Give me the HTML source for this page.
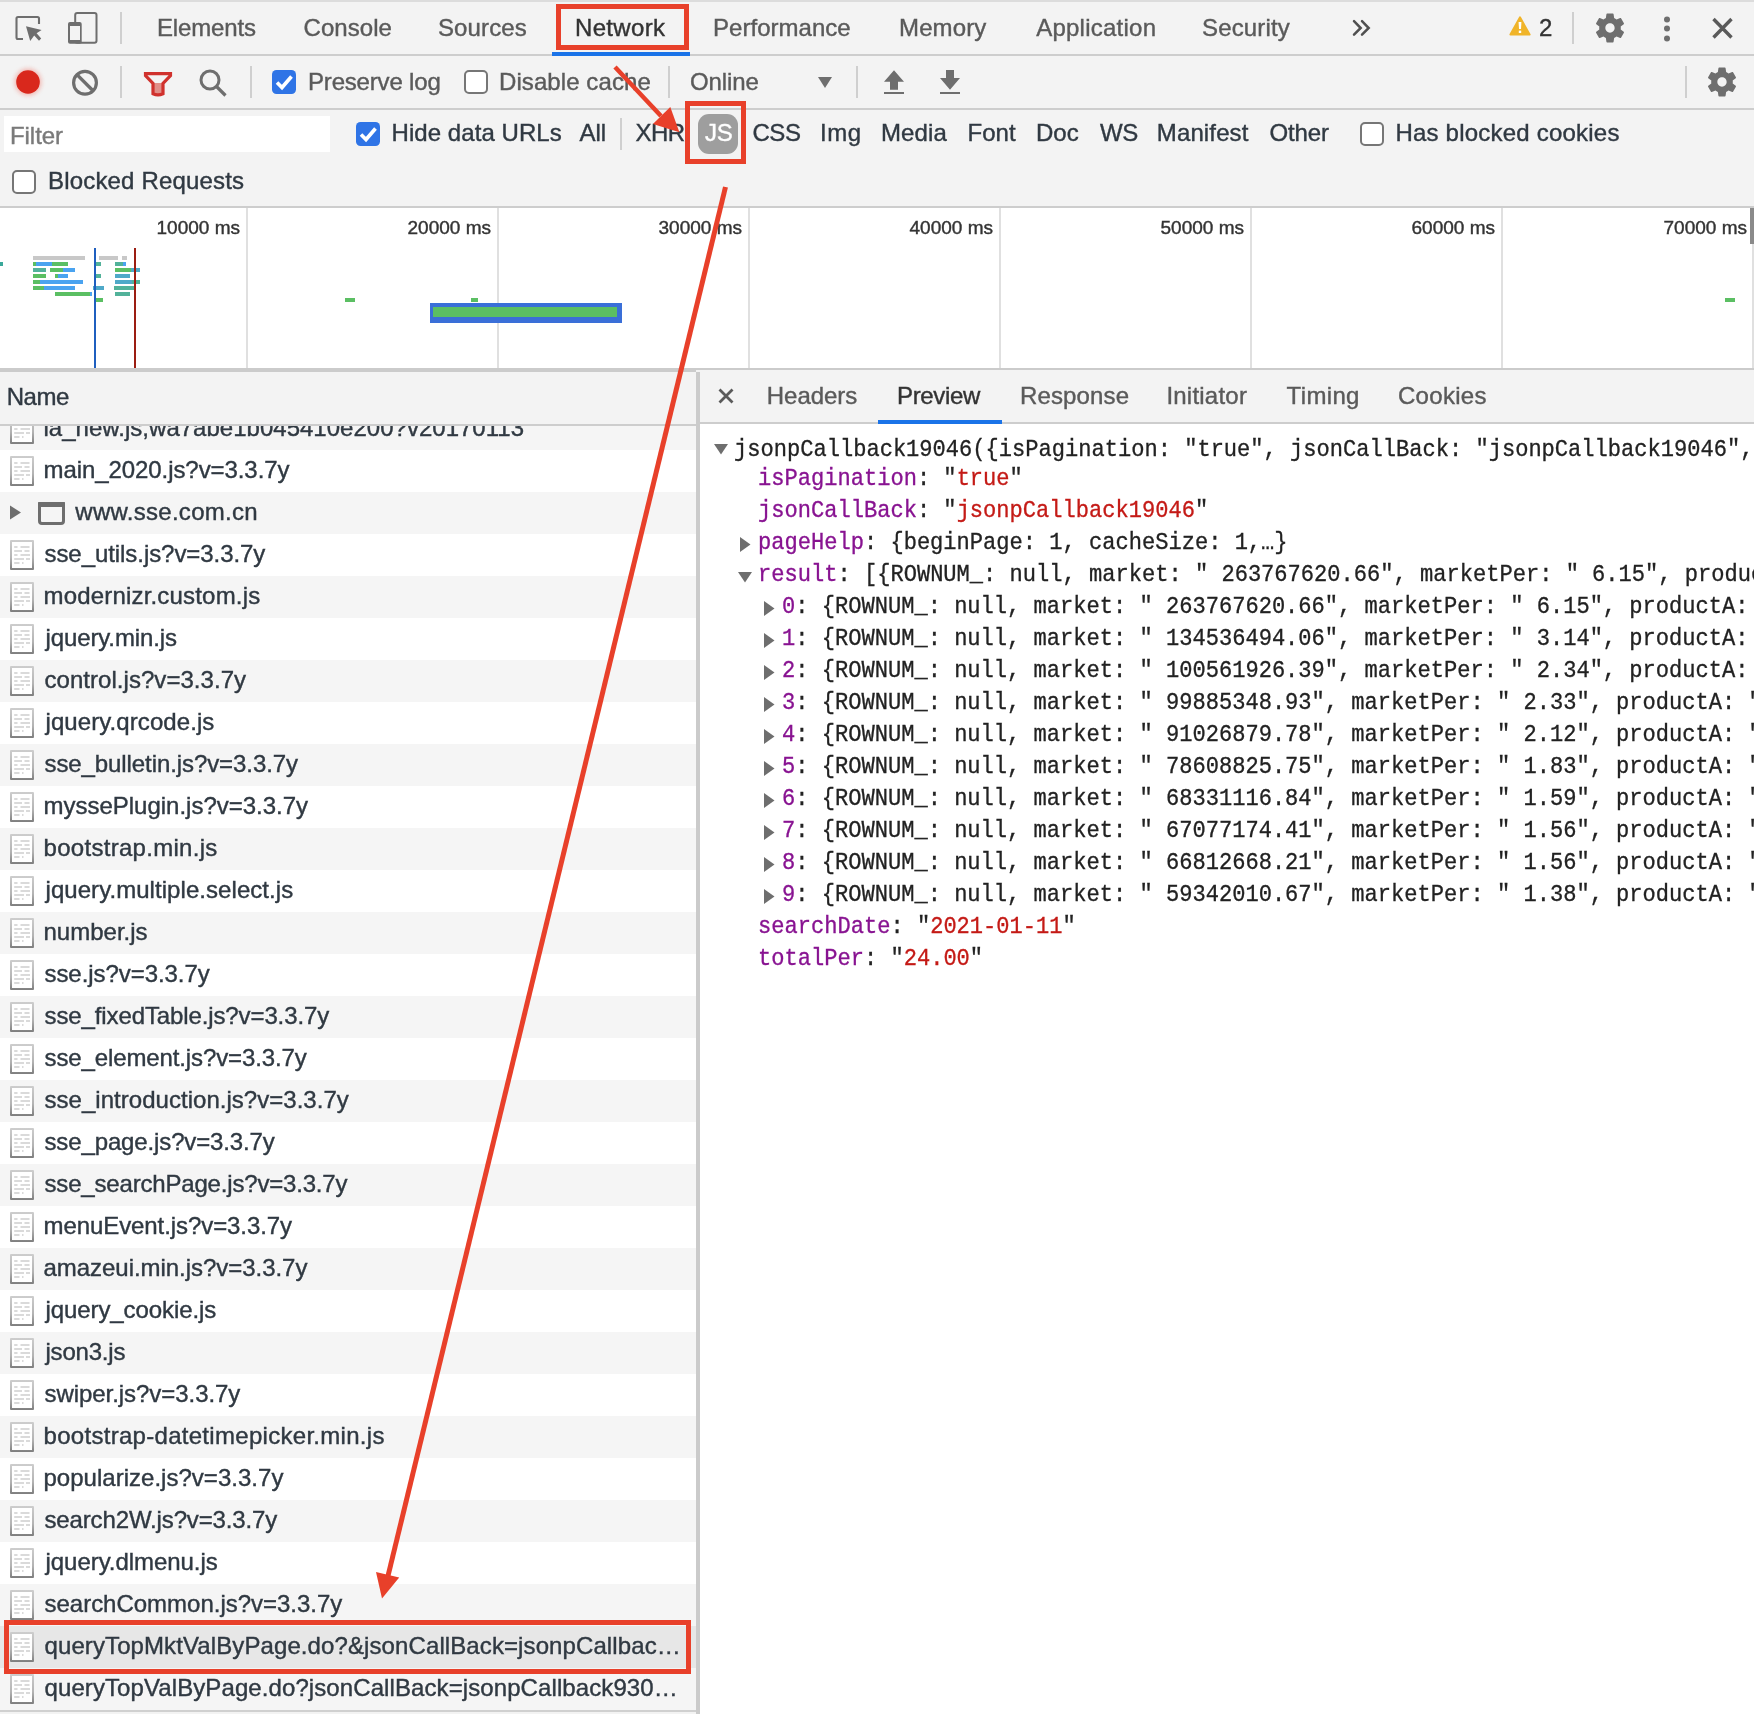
<!DOCTYPE html>
<html><head><meta charset="utf-8"><style>
html,body{margin:0;padding:0;}
body{width:1754px;height:1714px;position:relative;overflow:hidden;will-change:transform;background:#f3f3f3;font-family:"Liberation Sans", sans-serif;}
body div{position:absolute;}
.t{line-height:1;white-space:nowrap;font-family:"Liberation Sans", sans-serif;-webkit-text-stroke:0.4px currentColor;}
.m{line-height:1;white-space:pre;font-family:"Liberation Mono", monospace;-webkit-text-stroke:0.3px currentColor;}
</style></head><body>
<svg width="0" height="0" style="position:absolute"><defs><linearGradient id="fg" x1="0" y1="0" x2="0" y2="1"><stop offset="0" stop-color="#cdcdcd"/><stop offset="0.6" stop-color="#b3b3b3"/><stop offset="1" stop-color="#7e7e7e"/></linearGradient><g id="fileicon"><rect x="0" y="0" width="24" height="30" rx="1" fill="url(#fg)"/><rect x="2" y="2" width="20" height="26" fill="#fff"/><path d="M4.2 7 H7.5 M10.5 7 H19.5 M4.2 11 H12 M14.5 11 H19.5 M4.2 15 H7.5 M10.5 15 H20 M4.2 19 H14 M16 19 H20 M4.2 23 H9.5 M12 23 H13.5" stroke="#dadada" stroke-width="2.2"/></g></defs></svg>
<div style="left:0px;top:0px;width:1754px;height:2px;background:#dcdcdc;"></div>
<div style="left:0px;top:54px;width:1754px;height:2px;background:#cdcdcd;"></div>
<div style="left:0px;top:108px;width:1754px;height:2px;background:#cdcdcd;"></div>
<div style="left:0px;top:206px;width:1754px;height:2px;background:#cdcdcd;"></div>
<svg style="position:absolute;left:0px;top:0px;" width="120" height="56" viewBox="0 0 120 56"><path d="M23 39 H18 a1.5 1.5 0 0 1 -1.5 -1.5 V18.5 a1.5 1.5 0 0 1 1.5 -1.5 H37.5 a1.5 1.5 0 0 1 1.5 1.5 V24" fill="none" stroke="#6e6e6e" stroke-width="2.1"/><path d="M26 26.3 L41.6 30 L36.6 33.2 L41.2 38.6 L39 40.8 L34.2 35.6 L30.2 41 Z" fill="#6e6e6e"/><rect x="75.2" y="13" width="21.3" height="29.8" rx="2" fill="none" stroke="#6e6e6e" stroke-width="2"/><rect x="68" y="21.9" width="13.7" height="21.9" rx="2" fill="#6e6e6e"/><rect x="70" y="26" width="10" height="14" fill="#f3f3f3"/></svg>
<div style="left:120px;top:12px;width:2px;height:32px;background:#cfcfcf;"></div>
<div class="t" style="left:157.00px;top:15.68px;font-size:24px;color:#5a5a5a;letter-spacing:-0.143px;">Elements</div>
<div class="t" style="left:303.60px;top:15.68px;font-size:24px;color:#5a5a5a;letter-spacing:0.033px;">Console</div>
<div class="t" style="left:438.00px;top:15.68px;font-size:24px;color:#5a5a5a;letter-spacing:0.117px;">Sources</div>
<div class="t" style="left:575.00px;top:15.68px;font-size:24px;color:#333;letter-spacing:0.333px;">Network</div>
<div class="t" style="left:713.00px;top:15.68px;font-size:24px;color:#5a5a5a;letter-spacing:0.030px;">Performance</div>
<div class="t" style="left:899.00px;top:15.68px;font-size:24px;color:#5a5a5a;letter-spacing:0.140px;">Memory</div>
<div class="t" style="left:1036.20px;top:15.68px;font-size:24px;color:#5a5a5a;letter-spacing:0.240px;">Application</div>
<div class="t" style="left:1202.00px;top:15.68px;font-size:24px;color:#5a5a5a;letter-spacing:0.143px;">Security</div>
<div style="left:552px;top:52px;width:138px;height:4px;background:#1a73e8;"></div>
<svg style="position:absolute;left:1348px;top:16px;" width="26" height="24" viewBox="0 0 26 24"><path d="M6 5.2 L12.7 12 L6 18.7 M14 5.2 L20.7 12 L14 18.7" fill="none" stroke="#4f4f4f" stroke-width="2.5" stroke-linecap="round" stroke-linejoin="miter"/></svg>
<svg style="position:absolute;left:1506px;top:12px;" width="28" height="28" viewBox="0 0 28 28"><path d="M14 5.5 L23.5 22.5 H4.5 Z" fill="#f0b429" stroke="#f0b429" stroke-width="2.2" stroke-linejoin="round"/><path d="M12.6 10 H15.4 L15 17 H13 Z" fill="#fff"/><rect x="12.8" y="18.6" width="2.4" height="2.4" fill="#fff"/></svg>
<div class="t" style="left:1539.00px;top:15.68px;font-size:24px;color:#333;">2</div>
<div style="left:1572px;top:12px;width:2px;height:32px;background:#cfcfcf;"></div>
<svg style="position:absolute;left:1592px;top:10px" width="36" height="36" viewBox="0 0 24 24"><path fill-rule="evenodd" d="M19.14,12.94c0.04-0.3,0.06-0.61,0.06-0.94c0-0.32-0.02-0.64-0.07-0.94l2.03-1.58c0.18-0.14,0.23-0.41,0.12-0.61 l-1.92-3.32c-0.12-0.22-0.37-0.29-0.59-0.22l-2.39,0.96c-0.5-0.38-1.03-0.7-1.62-0.94L14.4,2.81c-0.04-0.24-0.24-0.41-0.48-0.41 h-3.84c-0.24,0-0.43,0.17-0.47,0.41L9.25,5.35C8.66,5.59,8.12,5.920,7.63,6.29L5.24,5.33c-0.22-0.08-0.47,0-0.59,0.22L2.74,8.87 C2.62,9.08,2.66,9.34,2.86,9.48l2.03,1.58C4.84,11.36,4.8,11.69,4.8,12s0.02,0.64,0.07,0.94l-2.03,1.58 c-0.18,0.14-0.23,0.41-0.12,0.61l1.92,3.32c0.12,0.22,0.37,0.29,0.59,0.22l2.39-0.96c0.5,0.38,1.03,0.7,1.62,0.94l0.36,2.54 c0.05,0.24,0.24,0.41,0.48,0.41h3.84c0.24,0,0.44-0.17,0.47-0.41l0.36-2.54c0.59-0.24,1.13-0.56,1.62-0.94l2.39,0.96 c0.22,0.08,0.47,0,0.59-0.22l1.92-3.32c0.12-0.22,0.07-0.47-0.12-0.61L19.14,12.94z M12,15.1c-1.71,0-3.1-1.39-3.1-3.1 s1.39-3.1,3.1-3.1s3.1,1.39,3.1,3.1S13.71,15.1,12,15.1z" fill="#6e6e6e"/></svg>
<svg style="position:absolute;left:1660px;top:14px;" width="14" height="30" viewBox="0 0 14 30"><circle cx="7" cy="5.5" r="3" fill="#6e6e6e"/><circle cx="7" cy="14.5" r="3" fill="#6e6e6e"/><circle cx="7" cy="24.5" r="3" fill="#6e6e6e"/></svg>
<svg style="position:absolute;left:1710px;top:16px;" width="24" height="24" viewBox="0 0 24 24"><path d="M3.5 3 L21.5 21.5 M21.5 3 L3.5 21.5" stroke="#5a5a5a" stroke-width="3.4"/></svg>
<svg style="position:absolute;left:8px;top:62px;" width="40" height="40" viewBox="0 0 40 40"><defs><filter id="glow" x="-50%" y="-50%" width="200%" height="200%"><feGaussianBlur stdDeviation="2.2"/></filter></defs><circle cx="20" cy="20" r="13.5" fill="#f08a80" opacity="0.55" filter="url(#glow)"/><circle cx="20" cy="20" r="11.8" fill="#d9281c"/></svg>
<svg style="position:absolute;left:70px;top:68px;" width="30" height="30" viewBox="0 0 30 30"><circle cx="15" cy="14.7" r="11.4" fill="none" stroke="#6e6e6e" stroke-width="3.2"/><path d="M7.2 6.9 L22.8 22.5" stroke="#6e6e6e" stroke-width="3.4"/></svg>
<div style="left:120px;top:66px;width:2px;height:32px;background:#cfcfcf;"></div>
<svg style="position:absolute;left:142px;top:70px;" width="32" height="28" viewBox="0 0 32 28"><path d="M11.5 13 H20.5 V23 Q16 25 11.5 23 Z" fill="#e08e88"/><path d="M3.5 3.6 H28.5 V5.5 L21 13.5 V23.8 Q16 26 11 23.8 V13.5 L3.5 5.5 Z" fill="none" stroke="#d0312d" stroke-width="3.2" stroke-linejoin="miter"/></svg>
<svg style="position:absolute;left:196px;top:64px;" width="36" height="36" viewBox="0 0 36 36"><circle cx="14" cy="16" r="9" fill="none" stroke="#6e6e6e" stroke-width="3"/><path d="M20.5 22.5 L29.5 31.5" stroke="#6e6e6e" stroke-width="3.2"/></svg>
<div style="left:250px;top:66px;width:2px;height:32px;background:#cfcfcf;"></div>
<svg style="position:absolute;left:272px;top:70px;" width="24" height="24" viewBox="0 0 24 24"><rect x="0" y="0" width="24" height="24" rx="4.5" fill="#2f74e6"/><path d="M5 12.5 L10 17.5 L19.5 6.5" fill="none" stroke="#fff" stroke-width="3.6"/></svg>
<div class="t" style="left:308.00px;top:69.68px;font-size:24px;color:#5a5a5a;letter-spacing:-0.182px;">Preserve log</div>
<svg style="position:absolute;left:464px;top:70px;" width="24" height="24" viewBox="0 0 24 24"><rect x="1" y="1" width="22" height="22" rx="4" fill="#fff" stroke="#767676" stroke-width="2"/></svg>
<div class="t" style="left:499.00px;top:69.68px;font-size:24px;color:#5a5a5a;letter-spacing:0.083px;">Disable cache</div>
<div style="left:668px;top:66px;width:2px;height:32px;background:#cfcfcf;"></div>
<div class="t" style="left:690.00px;top:69.68px;font-size:24px;color:#5a5a5a;letter-spacing:-0.100px;">Online</div>
<svg style="position:absolute;left:816px;top:74px;" width="18" height="16" viewBox="0 0 18 16"><path d="M2 3 H16 L9 14 Z" fill="#6e6e6e"/></svg>
<div style="left:856px;top:66px;width:2px;height:32px;background:#cfcfcf;"></div>
<svg style="position:absolute;left:882px;top:68px;" width="24" height="28" viewBox="0 0 24 28"><path d="M12 2.2 L22 13.8 H16 V21.8 H8 V13.8 H2 Z" fill="#6e6e6e"/><rect x="2" y="24" width="20" height="2" fill="#6e6e6e"/></svg>
<svg style="position:absolute;left:938px;top:68px;" width="24" height="28" viewBox="0 0 24 28"><path d="M8 2 H16 V10 H22 L12 21.8 L2 10 H8 Z" fill="#6e6e6e"/><rect x="2" y="24" width="20" height="2" fill="#6e6e6e"/></svg>
<div style="left:1685px;top:66px;width:2px;height:32px;background:#cfcfcf;"></div>
<svg style="position:absolute;left:1704px;top:64px" width="36" height="36" viewBox="0 0 24 24"><path fill-rule="evenodd" d="M19.14,12.94c0.04-0.3,0.06-0.61,0.06-0.94c0-0.32-0.02-0.64-0.07-0.94l2.03-1.58c0.18-0.14,0.23-0.41,0.12-0.61 l-1.92-3.32c-0.12-0.22-0.37-0.29-0.59-0.22l-2.39,0.96c-0.5-0.38-1.03-0.7-1.62-0.94L14.4,2.81c-0.04-0.24-0.24-0.41-0.48-0.41 h-3.84c-0.24,0-0.43,0.17-0.47,0.41L9.25,5.35C8.66,5.59,8.12,5.920,7.63,6.29L5.24,5.33c-0.22-0.08-0.47,0-0.59,0.22L2.74,8.87 C2.62,9.08,2.66,9.34,2.86,9.48l2.03,1.58C4.84,11.36,4.8,11.69,4.8,12s0.02,0.64,0.07,0.94l-2.03,1.58 c-0.18,0.14-0.23,0.41-0.12,0.61l1.92,3.32c0.12,0.22,0.37,0.29,0.59,0.22l2.39-0.96c0.5,0.38,1.03,0.7,1.62,0.94l0.36,2.54 c0.05,0.24,0.24,0.41,0.48,0.41h3.84c0.24,0,0.44-0.17,0.47-0.41l0.36-2.54c0.59-0.24,1.13-0.56,1.62-0.94l2.39,0.96 c0.22,0.08,0.47,0,0.59-0.22l1.92-3.32c0.12-0.22,0.07-0.47-0.12-0.61L19.14,12.94z M12,15.1c-1.71,0-3.1-1.39-3.1-3.1 s1.39-3.1,3.1-3.1s3.1,1.39,3.1,3.1S13.71,15.1,12,15.1z" fill="#6e6e6e"/></svg>
<div style="left:4px;top:116px;width:326px;height:36px;background:#fff;"></div>
<div class="t" style="left:10.00px;top:124.18px;font-size:24px;color:#7a7a7a;letter-spacing:-0.060px;">Filter</div>
<svg style="position:absolute;left:356px;top:122px;" width="24" height="24" viewBox="0 0 24 24"><rect x="0" y="0" width="24" height="24" rx="4.5" fill="#2f74e6"/><path d="M5 12.5 L10 17.5 L19.5 6.5" fill="none" stroke="#fff" stroke-width="3.6"/></svg>
<div class="t" style="left:391.50px;top:121.18px;font-size:24px;color:#303942;letter-spacing:0.062px;">Hide data URLs</div>
<div class="t" style="left:579.50px;top:121.18px;font-size:24px;color:#303942;letter-spacing:-0.100px;">All</div>
<div style="left:620px;top:118px;width:2px;height:32px;background:#cfcfcf;"></div>
<div class="t" style="left:635.40px;top:121.18px;font-size:24px;color:#303942;letter-spacing:-0.500px;">XHR</div>
<div style="left:698px;top:114px;width:40px;height:40px;background:#9e9e9e;border-radius:11px;"></div>
<div class="t" style="left:705.00px;top:121.18px;font-size:24px;color:#fff;letter-spacing:-0.200px;">JS</div>
<div class="t" style="left:752.40px;top:121.18px;font-size:24px;color:#303942;letter-spacing:-0.400px;">CSS</div>
<div class="t" style="left:820.00px;top:121.18px;font-size:24px;color:#303942;letter-spacing:0.500px;">Img</div>
<div class="t" style="left:881.00px;top:121.18px;font-size:24px;color:#303942;letter-spacing:0.125px;">Media</div>
<div class="t" style="left:967.40px;top:121.18px;font-size:24px;color:#303942;letter-spacing:0.100px;">Font</div>
<div class="t" style="left:1036.00px;top:121.18px;font-size:24px;color:#303942;">Doc</div>
<div class="t" style="left:1100.00px;top:121.18px;font-size:24px;color:#303942;letter-spacing:-0.500px;">WS</div>
<div class="t" style="left:1156.80px;top:121.18px;font-size:24px;color:#303942;letter-spacing:0.129px;">Manifest</div>
<div class="t" style="left:1269.40px;top:121.18px;font-size:24px;color:#303942;letter-spacing:-0.100px;">Other</div>
<svg style="position:absolute;left:1360px;top:122px;" width="24" height="24" viewBox="0 0 24 24"><rect x="1" y="1" width="22" height="22" rx="4" fill="#fff" stroke="#767676" stroke-width="2"/></svg>
<div class="t" style="left:1395.40px;top:121.18px;font-size:24px;color:#303942;letter-spacing:0.217px;">Has blocked cookies</div>
<svg style="position:absolute;left:12px;top:170px;" width="24" height="24" viewBox="0 0 24 24"><rect x="1" y="1" width="22" height="22" rx="4" fill="#fff" stroke="#767676" stroke-width="2"/></svg>
<div class="t" style="left:48.00px;top:169.18px;font-size:24px;color:#303942;letter-spacing:0.173px;">Blocked Requests</div>
<div style="left:0px;top:208px;width:1754px;height:160px;background:#fff;"></div>
<div style="left:246px;top:208px;width:2px;height:160px;background:#e0e0e0;"></div>
<div style="left:497px;top:208px;width:2px;height:160px;background:#e0e0e0;"></div>
<div style="left:748px;top:208px;width:2px;height:160px;background:#e0e0e0;"></div>
<div style="left:999px;top:208px;width:2px;height:160px;background:#e0e0e0;"></div>
<div style="left:1250px;top:208px;width:2px;height:160px;background:#e0e0e0;"></div>
<div style="left:1501px;top:208px;width:2px;height:160px;background:#e0e0e0;"></div>
<div class="t" style="left:-54px;top:217.91px;width:294px;text-align:right;font-size:19px;color:#333;">10000 ms</div>
<div class="t" style="left:197px;top:217.91px;width:294px;text-align:right;font-size:19px;color:#333;">20000 ms</div>
<div class="t" style="left:448px;top:217.91px;width:294px;text-align:right;font-size:19px;color:#333;">30000 ms</div>
<div class="t" style="left:699px;top:217.91px;width:294px;text-align:right;font-size:19px;color:#333;">40000 ms</div>
<div class="t" style="left:950px;top:217.91px;width:294px;text-align:right;font-size:19px;color:#333;">50000 ms</div>
<div class="t" style="left:1201px;top:217.91px;width:294px;text-align:right;font-size:19px;color:#333;">60000 ms</div>
<div class="t" style="left:1452px;top:217.91px;width:295px;text-align:right;font-size:19px;color:#333;">70000 ms</div>
<div style="left:1750px;top:208px;width:4px;height:36px;background:#8a8a8a;"></div>
<div style="left:1752px;top:244px;width:2px;height:124px;background:#e0e0e0;"></div>
<div style="left:33px;top:256px;width:52px;height:4px;background:#c8c8c8;"></div>
<div style="left:99px;top:256px;width:19px;height:4px;background:#c8c8c8;"></div>
<div style="left:122px;top:256px;width:5px;height:4px;background:#c8c8c8;"></div>
<div style="left:0px;top:262px;width:3px;height:4px;background:#3aa89a;"></div>
<div style="left:33px;top:262px;width:3px;height:4px;background:#5bbf63;"></div>
<div style="left:36px;top:262px;width:16px;height:4px;background:#4aa3f0;"></div>
<div style="left:52px;top:262px;width:16px;height:4px;background:#5bbf63;"></div>
<div style="left:96px;top:262px;width:5px;height:4px;background:#52b29a;"></div>
<div style="left:115px;top:262px;width:8px;height:4px;background:#52b29a;"></div>
<div style="left:123px;top:262px;width:3px;height:4px;background:#4aa3f0;"></div>
<div style="left:33px;top:268px;width:13px;height:4px;background:#52b29a;"></div>
<div style="left:50px;top:268px;width:13px;height:4px;background:#5bbf63;"></div>
<div style="left:63px;top:268px;width:12px;height:4px;background:#4aa3f0;"></div>
<div style="left:115px;top:268px;width:16px;height:4px;background:#5bbf63;"></div>
<div style="left:131px;top:268px;width:9px;height:4px;background:#4fa9c8;"></div>
<div style="left:33px;top:274px;width:13px;height:4px;background:#5bbf63;"></div>
<div style="left:55px;top:274px;width:3px;height:4px;background:#5bbf63;"></div>
<div style="left:58px;top:274px;width:10px;height:4px;background:#4aa3f0;"></div>
<div style="left:96px;top:274px;width:5px;height:4px;background:#52b29a;"></div>
<div style="left:115px;top:274px;width:15px;height:4px;background:#4fa9c8;"></div>
<div style="left:33px;top:280px;width:7px;height:4px;background:#5bbf63;"></div>
<div style="left:40px;top:280px;width:43px;height:4px;background:#4aa3f0;"></div>
<div style="left:115px;top:280px;width:17px;height:4px;background:#4fa9c8;"></div>
<div style="left:132px;top:280px;width:8px;height:4px;background:#52b29a;"></div>
<div style="left:33px;top:286px;width:11px;height:4px;background:#5bbf63;"></div>
<div style="left:44px;top:286px;width:31px;height:4px;background:#4aa3f0;"></div>
<div style="left:93px;top:286px;width:11px;height:4px;background:#4fa9c8;"></div>
<div style="left:114px;top:286px;width:20px;height:4px;background:#52b29a;"></div>
<div style="left:55px;top:292px;width:35px;height:4px;background:#5bbf63;"></div>
<div style="left:90px;top:292px;width:2px;height:4px;background:#4aa3f0;"></div>
<div style="left:115px;top:292px;width:15px;height:4px;background:#52b29a;"></div>
<div style="left:96px;top:298px;width:7px;height:4px;background:#5bbf63;"></div>
<div style="left:94px;top:248px;width:2px;height:120px;background:#1f5fbf;"></div>
<div style="left:134px;top:248px;width:2px;height:120px;background:#9b1d12;"></div>
<div style="left:345px;top:298px;width:10px;height:4px;background:#5bbf63;"></div>
<div style="left:471px;top:298px;width:7px;height:4px;background:#5bbf63;"></div>
<div style="left:430px;top:303px;width:192px;height:20px;background:#3a6fd8;"></div>
<div style="left:433px;top:307px;width:184px;height:10px;background:#5bbf63;"></div>
<div style="left:1725px;top:298px;width:10px;height:4px;background:#5bbf63;"></div>
<div style="left:0px;top:368px;width:1754px;height:2px;background:#cbcbcb;"></div>
<div style="left:0px;top:370px;width:696px;height:2px;background:#cbcbcb;"></div>
<div style="left:0px;top:408px;width:696px;height:42px;background:#f5f5f5;"></div>
<svg style="position:absolute;left:10px;top:414px" width="24" height="30" viewBox="0 0 24 30"><use href="#fileicon"/></svg>
<div class="t" style="left:43.50px;top:416.18px;font-size:24px;color:#303942;letter-spacing:0.014px;">la_new.js,wa7abe1b045410e200?v20170113</div>
<div style="left:0px;top:450px;width:696px;height:42px;background:#fff;"></div>
<svg style="position:absolute;left:10px;top:456px" width="24" height="30" viewBox="0 0 24 30"><use href="#fileicon"/></svg>
<div class="t" style="left:43.50px;top:458.18px;font-size:24px;color:#303942;letter-spacing:-0.075px;">main_2020.js?v=3.3.7y</div>
<div style="left:0px;top:492px;width:696px;height:42px;background:#f5f5f5;"></div>
<svg style="position:absolute;left:10px;top:502px" width="60" height="26" viewBox="0 0 60 26"><path d="M0 4 L11 11 L0 18 Z" fill="#6e6e6e" transform="translate(0,-0.5)"/><rect x="29.5" y="0.5" width="24" height="21" rx="2.5" fill="none" stroke="#6e6e6e" stroke-width="3"/><rect x="28" y="-1" width="27" height="6" rx="2.5" fill="#6e6e6e"/></svg>
<div class="t" style="left:75.30px;top:500.18px;font-size:24px;color:#303942;letter-spacing:0.277px;">www.sse.com.cn</div>
<div style="left:0px;top:534px;width:696px;height:42px;background:#fff;"></div>
<svg style="position:absolute;left:10px;top:540px" width="24" height="30" viewBox="0 0 24 30"><use href="#fileicon"/></svg>
<div class="t" style="left:44.50px;top:542.18px;font-size:24px;color:#303942;letter-spacing:-0.065px;">sse_utils.js?v=3.3.7y</div>
<div style="left:0px;top:576px;width:696px;height:42px;background:#f5f5f5;"></div>
<svg style="position:absolute;left:10px;top:582px" width="24" height="30" viewBox="0 0 24 30"><use href="#fileicon"/></svg>
<div class="t" style="left:43.50px;top:584.18px;font-size:24px;color:#303942;letter-spacing:0.183px;">modernizr.custom.js</div>
<div style="left:0px;top:618px;width:696px;height:42px;background:#fff;"></div>
<svg style="position:absolute;left:10px;top:624px" width="24" height="30" viewBox="0 0 24 30"><use href="#fileicon"/></svg>
<div class="t" style="left:45.50px;top:626.18px;font-size:24px;color:#303942;letter-spacing:-0.125px;">jquery.min.js</div>
<div style="left:0px;top:660px;width:696px;height:42px;background:#f5f5f5;"></div>
<svg style="position:absolute;left:10px;top:666px" width="24" height="30" viewBox="0 0 24 30"><use href="#fileicon"/></svg>
<div class="t" style="left:44.50px;top:668.18px;font-size:24px;color:#303942;letter-spacing:0.044px;">control.js?v=3.3.7y</div>
<div style="left:0px;top:702px;width:696px;height:42px;background:#fff;"></div>
<svg style="position:absolute;left:10px;top:708px" width="24" height="30" viewBox="0 0 24 30"><use href="#fileicon"/></svg>
<div class="t" style="left:45.50px;top:710.18px;font-size:24px;color:#303942;letter-spacing:0.080px;">jquery.qrcode.js</div>
<div style="left:0px;top:744px;width:696px;height:42px;background:#f5f5f5;"></div>
<svg style="position:absolute;left:10px;top:750px" width="24" height="30" viewBox="0 0 24 30"><use href="#fileicon"/></svg>
<div class="t" style="left:44.50px;top:752.18px;font-size:24px;color:#303942;letter-spacing:-0.087px;">sse_bulletin.js?v=3.3.7y</div>
<div style="left:0px;top:786px;width:696px;height:42px;background:#fff;"></div>
<svg style="position:absolute;left:10px;top:792px" width="24" height="30" viewBox="0 0 24 30"><use href="#fileicon"/></svg>
<div class="t" style="left:43.50px;top:794.18px;font-size:24px;color:#303942;letter-spacing:-0.009px;">myssePlugin.js?v=3.3.7y</div>
<div style="left:0px;top:828px;width:696px;height:42px;background:#f5f5f5;"></div>
<svg style="position:absolute;left:10px;top:834px" width="24" height="30" viewBox="0 0 24 30"><use href="#fileicon"/></svg>
<div class="t" style="left:43.50px;top:836.18px;font-size:24px;color:#303942;letter-spacing:0.293px;">bootstrap.min.js</div>
<div style="left:0px;top:870px;width:696px;height:42px;background:#fff;"></div>
<svg style="position:absolute;left:10px;top:876px" width="24" height="30" viewBox="0 0 24 30"><use href="#fileicon"/></svg>
<div class="t" style="left:45.50px;top:878.18px;font-size:24px;color:#303942;letter-spacing:0.058px;">jquery.multiple.select.js</div>
<div style="left:0px;top:912px;width:696px;height:42px;background:#f5f5f5;"></div>
<svg style="position:absolute;left:10px;top:918px" width="24" height="30" viewBox="0 0 24 30"><use href="#fileicon"/></svg>
<div class="t" style="left:43.50px;top:920.18px;font-size:24px;color:#303942;">number.js</div>
<div style="left:0px;top:954px;width:696px;height:42px;background:#fff;"></div>
<svg style="position:absolute;left:10px;top:960px" width="24" height="30" viewBox="0 0 24 30"><use href="#fileicon"/></svg>
<div class="t" style="left:44.50px;top:962.18px;font-size:24px;color:#303942;letter-spacing:-0.064px;">sse.js?v=3.3.7y</div>
<div style="left:0px;top:996px;width:696px;height:42px;background:#f5f5f5;"></div>
<svg style="position:absolute;left:10px;top:1002px" width="24" height="30" viewBox="0 0 24 30"><use href="#fileicon"/></svg>
<div class="t" style="left:44.50px;top:1004.18px;font-size:24px;color:#303942;letter-spacing:-0.112px;">sse_fixedTable.js?v=3.3.7y</div>
<div style="left:0px;top:1038px;width:696px;height:42px;background:#fff;"></div>
<svg style="position:absolute;left:10px;top:1044px" width="24" height="30" viewBox="0 0 24 30"><use href="#fileicon"/></svg>
<div class="t" style="left:44.50px;top:1046.18px;font-size:24px;color:#303942;letter-spacing:-0.118px;">sse_element.js?v=3.3.7y</div>
<div style="left:0px;top:1080px;width:696px;height:42px;background:#f5f5f5;"></div>
<svg style="position:absolute;left:10px;top:1086px" width="24" height="30" viewBox="0 0 24 30"><use href="#fileicon"/></svg>
<div class="t" style="left:44.50px;top:1088.18px;font-size:24px;color:#303942;letter-spacing:0.030px;">sse_introduction.js?v=3.3.7y</div>
<div style="left:0px;top:1122px;width:696px;height:42px;background:#fff;"></div>
<svg style="position:absolute;left:10px;top:1128px" width="24" height="30" viewBox="0 0 24 30"><use href="#fileicon"/></svg>
<div class="t" style="left:44.50px;top:1130.18px;font-size:24px;color:#303942;letter-spacing:-0.132px;">sse_page.js?v=3.3.7y</div>
<div style="left:0px;top:1164px;width:696px;height:42px;background:#f5f5f5;"></div>
<svg style="position:absolute;left:10px;top:1170px" width="24" height="30" viewBox="0 0 24 30"><use href="#fileicon"/></svg>
<div class="t" style="left:44.50px;top:1172.18px;font-size:24px;color:#303942;letter-spacing:-0.180px;">sse_searchPage.js?v=3.3.7y</div>
<div style="left:0px;top:1206px;width:696px;height:42px;background:#fff;"></div>
<svg style="position:absolute;left:10px;top:1212px" width="24" height="30" viewBox="0 0 24 30"><use href="#fileicon"/></svg>
<div class="t" style="left:43.50px;top:1214.18px;font-size:24px;color:#303942;letter-spacing:-0.080px;">menuEvent.js?v=3.3.7y</div>
<div style="left:0px;top:1248px;width:696px;height:42px;background:#f5f5f5;"></div>
<svg style="position:absolute;left:10px;top:1254px" width="24" height="30" viewBox="0 0 24 30"><use href="#fileicon"/></svg>
<div class="t" style="left:43.50px;top:1256.18px;font-size:24px;color:#303942;letter-spacing:-0.041px;">amazeui.min.js?v=3.3.7y</div>
<div style="left:0px;top:1290px;width:696px;height:42px;background:#fff;"></div>
<svg style="position:absolute;left:10px;top:1296px" width="24" height="30" viewBox="0 0 24 30"><use href="#fileicon"/></svg>
<div class="t" style="left:45.50px;top:1298.18px;font-size:24px;color:#303942;letter-spacing:-0.087px;">jquery_cookie.js</div>
<div style="left:0px;top:1332px;width:696px;height:42px;background:#f5f5f5;"></div>
<svg style="position:absolute;left:10px;top:1338px" width="24" height="30" viewBox="0 0 24 30"><use href="#fileicon"/></svg>
<div class="t" style="left:45.50px;top:1340.18px;font-size:24px;color:#303942;letter-spacing:-0.214px;">json3.js</div>
<div style="left:0px;top:1374px;width:696px;height:42px;background:#fff;"></div>
<svg style="position:absolute;left:10px;top:1380px" width="24" height="30" viewBox="0 0 24 30"><use href="#fileicon"/></svg>
<div class="t" style="left:44.50px;top:1382.18px;font-size:24px;color:#303942;letter-spacing:-0.053px;">swiper.js?v=3.3.7y</div>
<div style="left:0px;top:1416px;width:696px;height:42px;background:#f5f5f5;"></div>
<svg style="position:absolute;left:10px;top:1422px" width="24" height="30" viewBox="0 0 24 30"><use href="#fileicon"/></svg>
<div class="t" style="left:43.50px;top:1424.18px;font-size:24px;color:#303942;letter-spacing:0.293px;">bootstrap-datetimepicker.min.js</div>
<div style="left:0px;top:1458px;width:696px;height:42px;background:#fff;"></div>
<svg style="position:absolute;left:10px;top:1464px" width="24" height="30" viewBox="0 0 24 30"><use href="#fileicon"/></svg>
<div class="t" style="left:43.50px;top:1466.18px;font-size:24px;color:#303942;letter-spacing:0.019px;">popularize.js?v=3.3.7y</div>
<div style="left:0px;top:1500px;width:696px;height:42px;background:#f5f5f5;"></div>
<svg style="position:absolute;left:10px;top:1506px" width="24" height="30" viewBox="0 0 24 30"><use href="#fileicon"/></svg>
<div class="t" style="left:44.50px;top:1508.18px;font-size:24px;color:#303942;letter-spacing:-0.142px;">search2W.js?v=3.3.7y</div>
<div style="left:0px;top:1542px;width:696px;height:42px;background:#fff;"></div>
<svg style="position:absolute;left:10px;top:1548px" width="24" height="30" viewBox="0 0 24 30"><use href="#fileicon"/></svg>
<div class="t" style="left:45.50px;top:1550.18px;font-size:24px;color:#303942;letter-spacing:-0.047px;">jquery.dlmenu.js</div>
<div style="left:0px;top:1584px;width:696px;height:42px;background:#f5f5f5;"></div>
<svg style="position:absolute;left:10px;top:1590px" width="24" height="30" viewBox="0 0 24 30"><use href="#fileicon"/></svg>
<div class="t" style="left:44.50px;top:1592.18px;font-size:24px;color:#303942;letter-spacing:-0.013px;">searchCommon.js?v=3.3.7y</div>
<div style="left:0px;top:1626px;width:696px;height:42px;background:#e7e7e7;"></div>
<svg style="position:absolute;left:10px;top:1632px" width="24" height="30" viewBox="0 0 24 30"><use href="#fileicon"/></svg>
<div class="t" style="left:44.50px;top:1634.18px;font-size:24px;color:#303942;letter-spacing:0.100px;">queryTopMktValByPage.do?&amp;jsonCallBack=jsonpCallbac…</div>
<div style="left:0px;top:1668px;width:696px;height:42px;background:#f5f5f5;"></div>
<svg style="position:absolute;left:10px;top:1674px" width="24" height="30" viewBox="0 0 24 30"><use href="#fileicon"/></svg>
<div class="t" style="left:44.50px;top:1676.18px;font-size:24px;color:#303942;letter-spacing:0.092px;">queryTopValByPage.do?jsonCallBack=jsonpCallback930…</div>
<div style="left:0px;top:372px;width:696px;height:52px;background:#f3f3f3;"></div>
<div class="t" style="left:6.70px;top:385.28px;font-size:24px;color:#303942;letter-spacing:-0.467px;">Name</div>
<div style="left:0px;top:424px;width:696px;height:2px;background:#cdcdcd;"></div>
<div style="left:0px;top:1710px;width:696px;height:2px;background:#d0d0d0;"></div>
<div style="left:696px;top:372px;width:4px;height:1342px;background:#cbcbcb;"></div>
<div style="left:700px;top:372px;width:1054px;height:50px;background:#f3f3f3;"></div>
<div style="left:700px;top:422px;width:1054px;height:2px;background:#cdcdcd;"></div>
<div style="left:700px;top:424px;width:1054px;height:1290px;background:#fff;"></div>
<svg style="position:absolute;left:716px;top:386px;" width="20" height="20" viewBox="0 0 20 20"><path d="M3.5 3.5 L16.5 16.5 M16.5 3.5 L3.5 16.5" stroke="#5a5a5a" stroke-width="2.8"/></svg>
<div class="t" style="left:766.80px;top:383.68px;font-size:24px;color:#5a5a5a;letter-spacing:-0.033px;">Headers</div>
<div class="t" style="left:897.00px;top:383.68px;font-size:24px;color:#333;letter-spacing:-0.333px;">Preview</div>
<div class="t" style="left:1020.00px;top:383.68px;font-size:24px;color:#5a5a5a;letter-spacing:0.129px;">Response</div>
<div class="t" style="left:1166.40px;top:383.68px;font-size:24px;color:#5a5a5a;letter-spacing:0.225px;">Initiator</div>
<div class="t" style="left:1286.60px;top:383.68px;font-size:24px;color:#5a5a5a;letter-spacing:0.340px;">Timing</div>
<div class="t" style="left:1398.00px;top:383.68px;font-size:24px;color:#5a5a5a;letter-spacing:0.283px;">Cookies</div>
<div style="left:878px;top:420px;width:124px;height:4px;background:#1a73e8;"></div>
<svg style="position:absolute;left:714px;top:444px;" width="14" height="11" viewBox="0 0 14 11"><path d="M0 0 H14 L7 10.5 Z" fill="#6e6e6e"/></svg>
<div class="m" style="left:734px;top:439.69px;font-size:22.07px;color:#222;transform-origin:0 16.91px;transform:scaleY(1.1);">jsonpCallback19046({isPagination: "true", jsonCallBack: "jsonpCallback19046",</div>
<div class="m" style="left:758px;top:469.09px;font-size:22.07px;color:#222;transform-origin:0 16.91px;transform:scaleY(1.1);"><span style="color:#881391">isPagination</span>: "<span style="color:#c41a16">true</span>"</div>
<div class="m" style="left:758px;top:501.09px;font-size:22.07px;color:#222;transform-origin:0 16.91px;transform:scaleY(1.1);"><span style="color:#881391">jsonCallBack</span>: "<span style="color:#c41a16">jsonpCallback19046</span>"</div>
<svg style="position:absolute;left:740px;top:537px;" width="11" height="15" viewBox="0 0 11 15"><path d="M0 0 L10.5 7.5 L0 15 Z" fill="#6e6e6e"/></svg>
<div class="m" style="left:758px;top:533.09px;font-size:22.07px;color:#222;transform-origin:0 16.91px;transform:scaleY(1.1);"><span style="color:#881391">pageHelp</span>: {beginPage: 1, cacheSize: 1,…}</div>
<svg style="position:absolute;left:738px;top:572px;" width="14" height="11" viewBox="0 0 14 11"><path d="M0 0 H14 L7 10.5 Z" fill="#6e6e6e"/></svg>
<div class="m" style="left:758px;top:565.09px;font-size:22.07px;color:#222;transform-origin:0 16.91px;transform:scaleY(1.1);"><span style="color:#881391">result</span>: [{ROWNUM_: null, market: " 263767620.66", marketPer: " 6.15", productA: "</div>
<svg style="position:absolute;left:764px;top:600.5px;" width="11" height="15" viewBox="0 0 11 15"><path d="M0 0 L10.5 7.5 L0 15 Z" fill="#6e6e6e"/></svg>
<div class="m" style="left:782px;top:597.09px;font-size:22.07px;color:#222;transform-origin:0 16.91px;transform:scaleY(1.1);"><span style="color:#881391">0</span>: {ROWNUM_: null, market: " 263767620.66", marketPer: " 6.15", productA: "xxxxxxxxxx</div>
<svg style="position:absolute;left:764px;top:632.5px;" width="11" height="15" viewBox="0 0 11 15"><path d="M0 0 L10.5 7.5 L0 15 Z" fill="#6e6e6e"/></svg>
<div class="m" style="left:782px;top:629.09px;font-size:22.07px;color:#222;transform-origin:0 16.91px;transform:scaleY(1.1);"><span style="color:#881391">1</span>: {ROWNUM_: null, market: " 134536494.06", marketPer: " 3.14", productA: "xxxxxxxxxx</div>
<svg style="position:absolute;left:764px;top:664.5px;" width="11" height="15" viewBox="0 0 11 15"><path d="M0 0 L10.5 7.5 L0 15 Z" fill="#6e6e6e"/></svg>
<div class="m" style="left:782px;top:661.09px;font-size:22.07px;color:#222;transform-origin:0 16.91px;transform:scaleY(1.1);"><span style="color:#881391">2</span>: {ROWNUM_: null, market: " 100561926.39", marketPer: " 2.34", productA: "xxxxxxxxxx</div>
<svg style="position:absolute;left:764px;top:696.5px;" width="11" height="15" viewBox="0 0 11 15"><path d="M0 0 L10.5 7.5 L0 15 Z" fill="#6e6e6e"/></svg>
<div class="m" style="left:782px;top:693.09px;font-size:22.07px;color:#222;transform-origin:0 16.91px;transform:scaleY(1.1);"><span style="color:#881391">3</span>: {ROWNUM_: null, market: " 99885348.93", marketPer: " 2.33", productA: "xxxxxxxxxx</div>
<svg style="position:absolute;left:764px;top:728.5px;" width="11" height="15" viewBox="0 0 11 15"><path d="M0 0 L10.5 7.5 L0 15 Z" fill="#6e6e6e"/></svg>
<div class="m" style="left:782px;top:725.09px;font-size:22.07px;color:#222;transform-origin:0 16.91px;transform:scaleY(1.1);"><span style="color:#881391">4</span>: {ROWNUM_: null, market: " 91026879.78", marketPer: " 2.12", productA: "xxxxxxxxxx</div>
<svg style="position:absolute;left:764px;top:760.5px;" width="11" height="15" viewBox="0 0 11 15"><path d="M0 0 L10.5 7.5 L0 15 Z" fill="#6e6e6e"/></svg>
<div class="m" style="left:782px;top:757.09px;font-size:22.07px;color:#222;transform-origin:0 16.91px;transform:scaleY(1.1);"><span style="color:#881391">5</span>: {ROWNUM_: null, market: " 78608825.75", marketPer: " 1.83", productA: "xxxxxxxxxx</div>
<svg style="position:absolute;left:764px;top:792.5px;" width="11" height="15" viewBox="0 0 11 15"><path d="M0 0 L10.5 7.5 L0 15 Z" fill="#6e6e6e"/></svg>
<div class="m" style="left:782px;top:789.09px;font-size:22.07px;color:#222;transform-origin:0 16.91px;transform:scaleY(1.1);"><span style="color:#881391">6</span>: {ROWNUM_: null, market: " 68331116.84", marketPer: " 1.59", productA: "xxxxxxxxxx</div>
<svg style="position:absolute;left:764px;top:824.5px;" width="11" height="15" viewBox="0 0 11 15"><path d="M0 0 L10.5 7.5 L0 15 Z" fill="#6e6e6e"/></svg>
<div class="m" style="left:782px;top:821.09px;font-size:22.07px;color:#222;transform-origin:0 16.91px;transform:scaleY(1.1);"><span style="color:#881391">7</span>: {ROWNUM_: null, market: " 67077174.41", marketPer: " 1.56", productA: "xxxxxxxxxx</div>
<svg style="position:absolute;left:764px;top:856.5px;" width="11" height="15" viewBox="0 0 11 15"><path d="M0 0 L10.5 7.5 L0 15 Z" fill="#6e6e6e"/></svg>
<div class="m" style="left:782px;top:853.09px;font-size:22.07px;color:#222;transform-origin:0 16.91px;transform:scaleY(1.1);"><span style="color:#881391">8</span>: {ROWNUM_: null, market: " 66812668.21", marketPer: " 1.56", productA: "xxxxxxxxxx</div>
<svg style="position:absolute;left:764px;top:888.5px;" width="11" height="15" viewBox="0 0 11 15"><path d="M0 0 L10.5 7.5 L0 15 Z" fill="#6e6e6e"/></svg>
<div class="m" style="left:782px;top:885.09px;font-size:22.07px;color:#222;transform-origin:0 16.91px;transform:scaleY(1.1);"><span style="color:#881391">9</span>: {ROWNUM_: null, market: " 59342010.67", marketPer: " 1.38", productA: "xxxxxxxxxx</div>
<div class="m" style="left:758px;top:917.09px;font-size:22.07px;color:#222;transform-origin:0 16.91px;transform:scaleY(1.1);"><span style="color:#881391">searchDate</span>: "<span style="color:#c41a16">2021-01-11</span>"</div>
<div class="m" style="left:758px;top:949.09px;font-size:22.07px;color:#222;transform-origin:0 16.91px;transform:scaleY(1.1);"><span style="color:#881391">totalPer</span>: "<span style="color:#c41a16">24.00</span>"</div>
<div style="left:556px;top:4px;width:123px;height:36px;border:5px solid #e8402a;"></div>
<div style="left:685px;top:101px;width:51px;height:53px;border:5px solid #e8402a;"></div>
<div style="left:4px;top:1620px;width:677px;height:44px;border:5px solid #e8402a;"></div>
<svg style="position:absolute;left:0px;top:0px;pointer-events:none;" width="1754" height="1714" viewBox="0 0 1754 1714">
<path d="M615 67 L661 116" stroke="#e8402a" stroke-width="4.5"/>
<path d="M679.4 132.2 L652.9 124 L670.3 107 Z" fill="#e8402a"/>
<path d="M725.5 187 L387.5 1578" stroke="#e8402a" stroke-width="5"/>
<path d="M382 1598.5 L376 1572 L399.2 1577.6 Z" fill="#e8402a"/>
</svg>
</body></html>
